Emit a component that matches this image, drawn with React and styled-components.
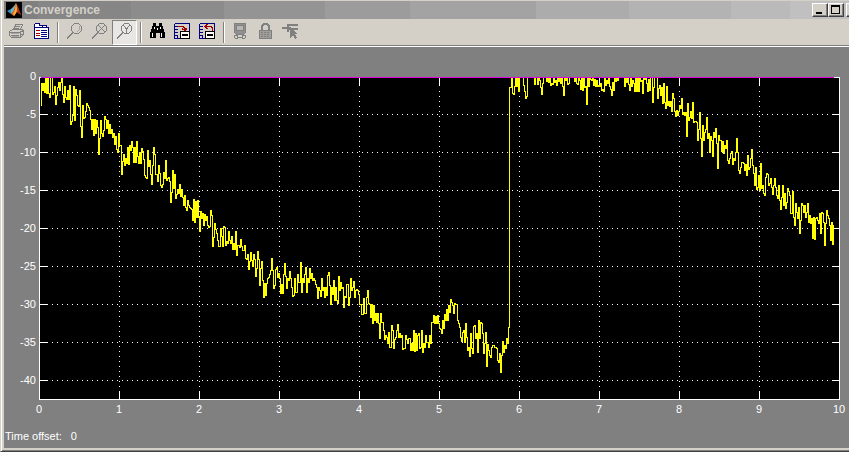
import React from 'react'
import styled, { createGlobalStyle } from 'styled-components'

const GlobalStyle = createGlobalStyle`
    body {
        margin: 0;
        background: #d4d0c8;
        font-family: "Liberation Sans", Arial, sans-serif;
    }
`
const Window = styled.div`
    min-height: 100vh;
    box-sizing: border-box;
    display: flex;
    flex-direction: column;
    padding-top: 1px;
    padding-left: 2px;
    background: #d4d0c8;
    border-left: 1px solid #d4d0c8;
    border-bottom: 1px solid #404040;
    box-shadow: inset 1px 0 0 #ffffff, inset 0 -1px 0 #808080;
    overflow: hidden;
`
const TitleBar = styled.header`
    height: 18px;
    display: flex;
    align-items: center;
    gap: 2px;
    margin-left: 1px;
    padding-left: 2px;
    background: linear-gradient(
        to right,
        #808080 4%, #868686 4% 15%, #8c8c8c 15% 26%, #949494 26% 38%,
        #9c9c9c 38% 48%, #a3a3a3 48% 63%, #acacac 63% 74%, #b3b3b3 74% 86%,
        #bababa 86% 93%, #c0c0c0 93%
    );
    overflow: hidden;
`
const Title = styled.h1`
    flex: 1;
    margin: 0;
    font-size: 12px;
    line-height: 18px;
    font-weight: bold;
    color: #d4d0c8;
`
const WindowControls = styled.div`
    display: flex;
    margin-right: -13px;
`
const ControlButton = styled.button`
    width: 16px;
    height: 14px;
    padding: 0;
    display: flex;
    background: #d4d0c8;
    border: 1px solid;
    border-color: #ffffff #404040 #404040 #ffffff;
    box-shadow: inset -1px -1px 0 #808080;
    margin-left: ${props => props.$spaced ? '2px' : '0'};
`
const Toolbar = styled.nav`
    height: 26px;
    display: flex;
    align-items: center;
    margin-left: 1px;
    border-bottom: 1px solid #808080;
`
const ToolButton = styled.button`
    width: 25px;
    height: 25px;
    padding: 0 0 2px;
    display: flex;
    align-items: center;
    justify-content: center;
    border: 1px solid;
    border-color: ${props => props.$pressed ? '#808080 #ffffff #ffffff #808080' : 'transparent'};
    background: ${props => props.$pressed ? '#e9e7e3' : 'transparent'};
`
const Separator = styled.div`
    width: 1px;
    height: 21px;
    margin: 0 4px 0 3px;
    background: #808080;
    box-shadow: 1px 0 0 #ffffff;
`
const Scope = styled.main`
    flex: 1;
    display: flex;
    flex-direction: column;
    margin-left: 1px;
    margin-bottom: 3px;
    border-top: 1px solid #ffffff;
    background: #808080;
`
const Chart = styled.svg`
    display: block;
    width: 100%;
    font-size: 11px;
    fill: #ffffff;
`
const Status = styled.footer`
    display: flex;
    gap: 9px;
    padding: 11px 1px 0;
    font-size: 11px;
    line-height: 13px;
    color: #ffffff;
`

// level below 0 dB for each column of the plot, 38 units per 5 dB
const samples = [
    28, 6, 13, 6, 15, 0, 16, 0, 16, 20,
    0, 0, 17, 15, 9, 27, 18, 10, 5, 13,
    5, 0, 17, 25, 9, 20, 22, 13, 22, 8,
    47, 44, 38, 9, 43, 12, 18, 28, 29, 13,
    49, 60, 28, 41, 40, 34, 26, 28, 30, 33,
    42, 52, 42, 58, 42, 56, 43, 50, 77, 61,
    43, 56, 59, 53, 39, 42, 51, 43, 56, 47,
    56, 52, 60, 56, 67, 59, 72, 75, 56, 68,
    68, 97, 84, 77, 88, 81, 86, 70, 87, 68,
    73, 64, 70, 85, 70, 85, 64, 79, 86, 75,
    86, 71, 74, 82, 98, 100, 101, 73, 89, 83,
    97, 107, 88, 70, 77, 97, 97, 104, 88, 96,
    108, 110, 107, 95, 101, 83, 103, 101, 100, 104,
    125, 115, 93, 111, 97, 121, 117, 112, 116, 107,
    119, 112, 120, 128, 118, 130, 133, 123, 128, 130,
    131, 132, 143, 122, 145, 124, 140, 123, 140, 154,
    134, 141, 136, 148, 137, 143, 139, 148, 150, 149,
    133, 138, 169, 160, 146, 152, 156, 163, 169, 169,
    151, 159, 169, 149, 150, 168, 164, 166, 154, 163,
    166, 159, 172, 166, 172, 154, 178, 168, 168, 170,
    162, 169, 173, 173, 168, 181, 182, 177, 192, 184,
    175, 183, 189, 177, 182, 199, 191, 174, 182, 208,
    191, 184, 203, 220, 206, 218, 206, 201, 200, 197,
    193, 181, 193, 211, 208, 192, 190, 200, 196, 201,
    216, 207, 216, 197, 186, 199, 211, 201, 203, 194,
    201, 210, 219, 218, 201, 215, 215, 197, 205, 205,
    185, 215, 201, 205, 197, 190, 215, 201, 205, 191,
    201, 196, 203, 201, 203, 207, 210, 221, 210, 213,
    219, 201, 213, 210, 220, 210, 218, 198, 195, 208,
    227, 210, 217, 203, 223, 210, 223, 226, 199, 213,
    205, 211, 210, 230, 219, 220, 207, 207, 228, 220,
    201, 213, 210, 204, 220, 213, 212, 213, 217, 227,
    227, 237, 237, 221, 236, 236, 220, 213, 226, 227,
    240, 227, 246, 228, 243, 236, 245, 236, 246, 261,
    236, 245, 245, 253, 262, 258, 260, 266, 255, 270,
    270, 248, 253, 271, 262, 260, 253, 247, 260, 256,
    260, 258, 272, 271, 271, 258, 262, 266, 261, 261,
    273, 266, 273, 253, 274, 256, 273, 258, 256, 271,
    270, 253, 275, 266, 270, 258, 265, 265, 270, 258,
    266, 245, 245, 238, 246, 239, 246, 238, 246, 251,
    252, 256, 243, 251, 237, 243, 232, 243, 228, 235,
    222, 225, 228, 236, 226, 227, 227, 243, 246, 250,
    260, 264, 255, 253, 265, 246, 260, 273, 270, 279,
    256, 271, 276, 249, 248, 261, 256, 275, 243, 261,
    245, 246, 256, 276, 266, 255, 289, 267, 273, 278,
    280, 270, 268, 268, 270, 270, 271, 283, 285, 276,
    295, 278, 264, 275, 268, 271, 261, 266, 250, 10,
    10, 0, 16, 17, 9, 0, 9, 0, 14, 0,
    0, 0, 0, 8, 14, 21, 19, 0, 0, 0,
    0, 0, 0, 0, 7, 0, 0, 7, 0, 3,
    10, 17, 6, 0, 0, 0, 4, 0, 5, 0,
    8, 6, 7, 0, 5, 3, 8, 0, 4, 0,
    6, 0, 9, 18, 0, 3, 0, 7, 6, 0,
    0, 0, 0, 0, 4, 0, 6, 7, 0, 3,
    12, 0, 13, 0, 10, 9, 27, 0, 9, 0,
    2, 3, 0, 8, 2, 9, 3, 9, 8, 9,
    6, 13, 12, 14, 0, 8, 3, 6, 0, 9,
    12, 18, 5, 13, 0, 4, 0, 3, 0, 0,
    0, 0, 0, 0, 9, 0, 5, 0, 7, 13,
    0, 9, 3, 6, 14, 0, 14, 0, 14, 0,
    4, 3, 16, 0, 2, 0, 6, 14, 2, 13,
    0, 0, 25, 10, 0, 0, 0, 21, 11, 8,
    18, 10, 26, 6, 25, 31, 9, 28, 24, 29,
    24, 34, 16, 21, 34, 39, 33, 38, 34, 28,
    31, 21, 37, 35, 38, 35, 59, 26, 43, 40,
    34, 41, 25, 45, 44, 44, 45, 63, 52, 35,
    61, 79, 48, 63, 55, 52, 40, 61, 56, 75,
    59, 63, 79, 55, 60, 51, 66, 91, 58, 63,
    63, 74, 64, 76, 68, 71, 63, 83, 86, 81,
    76, 74, 87, 81, 83, 75, 61, 75, 93, 96,
    90, 85, 85, 86, 93, 87, 98, 78, 92, 90,
    81, 72, 88, 96, 108, 90, 112, 110, 98, 113,
    86, 111, 108, 116, 118, 100, 96, 97, 108, 106,
    101, 110, 117, 108, 101, 110, 118, 121, 108, 123,
    132, 120, 108, 128, 116, 131, 125, 111, 114, 118,
    136, 136, 114, 140, 148, 126, 135, 141, 130, 156,
    143, 126, 128, 135, 128, 140, 135, 126, 145, 138,
    146, 141, 161, 140, 162, 141, 140, 143, 146, 136,
    156, 135, 136, 145, 168, 146, 133, 138, 141, 148,
    163, 145, 167, 147
]

const seconds = [0, 1, 2, 3, 4, 5, 6, 7, 8, 9, 10]
const levels = [0, -5, -10, -15, -20, -25, -30, -35, -40]

const plotX = 35
const plotY = 30
const plotWidth = 800
const plotHeight = 322

const timeX = t => plotX + t * 80
const levelY = db => plotY - 1 + Math.round(-db * 7.6)

const trace = samples
    .map((s, i) => i === 0 ? `M${plotX + 1} ${plotY + s}` : `H${plotX + i + 1}V${plotY + s}`)
    .join('')

const Plot = () => (
    <Chart viewBox='0 0 845 372' role='img' aria-label='Convergence over time'>
        <rect x={plotX} y={plotY} width={plotWidth} height={plotHeight} fill='#000000' />
        <g transform='translate(.5 .5)' fill='none' stroke='#ffffff' shapeRendering='crispEdges'>
            {levels.slice(1).map(db => (
                <g key={db}>
                    <path d={`M${plotX + 12} ${levelY(db)}H${plotX + plotWidth - 8}`} strokeDasharray='1 4' />
                    <path d={`M${plotX} ${levelY(db)}h8M${plotX + plotWidth} ${levelY(db)}h-8`} />
                </g>
            ))}
            {seconds.slice(1, -1).map(t => (
                <g key={t}>
                    <path d={`M${timeX(t)} ${plotY + 13}V${plotY + plotHeight - 8}`} strokeDasharray='1 4' />
                    <path d={`M${timeX(t)} ${plotY}v8M${timeX(t)} ${plotY + plotHeight}v-8`} />
                </g>
            ))}
            <path d={trace} stroke='#ffff00' />
            <path d={`M${plotX} ${plotY}v${plotHeight}h${plotWidth}v-${plotHeight}z`} />
            <path d={`M${plotX + 1} ${plotY}h793`} stroke='#e000e0' />
        </g>
        {levels.map(db => (
            <text key={db} x={plotX - 3} y={levelY(db) + 4} textAnchor='end'>{db}</text>
        ))}
        {seconds.map(t => (
            <text key={t} x={timeX(t)} y={plotY + plotHeight + 14} textAnchor='middle'>{t}</text>
        ))}
    </Chart>
)

const MatlabLogo = () => (
    <svg width='16' height='16' viewBox='0 0 16 16' aria-hidden='true'>
        <rect width='16' height='16' fill='#000000' />
        <path d='M1 9l4-2 2 2-2 3z' fill='#3b8fc0' />
        <path d='M5 7l3-3 2-3-1 7-3 4-1-1z' fill='#6fb4cf' />
        <path d='M10 1l2 4 3 8-4-3-3 4-3-2 3-4z' fill='#d95b1a' />
        <path d='M10 1l1 6-1 4-2 3-1-2 2-4z' fill='#f4b13d' />
        <path d='M11 4l4 9-3-2z' fill='#9c2417' />
    </svg>
)

const Icon = ({ children, color = '#808080' }) => (
    <svg width='17' height='17' viewBox='0 0 17 17' fill='none' stroke={color} shapeRendering='crispEdges' aria-hidden='true'>
        {children}
    </svg>
)

const PrintIcon = () => (
    <Icon>
        <path d='M5.5 6.5l2-5h7l-2 5M7 3.5h5M6 5.5h5' />
        <path d='M1.5 8.5l3-2h9l2 1v4l-3 3h-9l-2-2zM1.5 9.5h10l4-2M12.5 9.5v5M3 12.5h8M13 11.5h2' />
        <path d='M3 10.5h8M4 13.5h7' stroke='#a8a6a2' />
    </Icon>
)
const ParamsIcon = () => (
    <Icon color='#000080'>
        <path d='M1.5 15.5v-14l1-1h4v2h7v2h2v11z' fill='#ffffff' />
        <path d='M1 4.5h15M9.5 2v3M1 15.5h15' />
        <path d='M8 7.5h6M8 9.500h6M8 11.500h6M8 13.500h6' />
        <path d='M3 7.500h4M3 10.500h4M3 12.500h4' stroke='#a00000' />
    </Icon>
)
const ZoomIcon = ({ mark }) => (
    <Icon>
        <path d='M8.5 .5h4l3 3v4l-3 3h-4l-3-3v-4z' />
        <path d='M7 9.5L1 15.5' strokeWidth='2' />
        {mark === 'x' && <path d='M7 2l7 7M14 2L7 9' />}
        {mark === 'y' && <path d='M7 2l3.500 4L14 2M10.500 6v4' />}
        {!mark && <path d='M13 3v4l-2 2' stroke='#a8a6a2' />}
    </Icon>
)
const BinocularsIcon = () => (
    <Icon color='none'>
        <path d='M4 0h3v3h3V0h3v3h1v3h1v3h1v6h-5v-5H7v5H1V9h1V6h1V3h1z' fill='#000000' />
        <path d='M5 4h1v2H5zM11 4h1v2h-1zM3 10h1v4H3zM12 10h1v4h-1zM8 5h1v2H8z' fill='#ffffff' />
    </Icon>
)
const AxesIcon = ({ restore }) => (
    <Icon color='#000080'>
        <path d='M.5 .5v15H6M.5 .5h15V8M1 3.500h3M1 6.500h3M1 9.500h3M1 12.500h3M3.500 15v-2' />
        {restore
            ? <path d='M5 3.500h7l1 1v3M8.500 1l-3 2.500 3 2.500M7.500 2v3' stroke='#a00000' />
            : <path d='M4 3.500h5l2 2v2M8 5.500l3 2.500 2-2.500M9 6.500h4' stroke='#a00000' />}
        <path d='M6.500 8.500h9v7h-9z' fill='#ffffff' stroke='#000000' />
        <path d='M8.500 11.500h5v1h-5z' stroke='#000000' />
    </Icon>
)
const FloatIcon = () => (
    <Icon>
        <path d='M2.500 .5h11v9l-2 2h-7l-2-2z' fill='#909090' />
        <path d='M4.500 2.500h7v5h-7z' fill='#b8b6b0' />
        <path d='M3 12.500h2l1 2h4l1-2h2M3 15.500h3M10 15.500h3M2.500 12v3M13.500 12v3' />
    </Icon>
)
const LockIcon = () => (
    <Icon>
        <path d='M5 7V3l2-2h3l2 2v4' strokeWidth='2' />
        <path d='M2.500 7.500h12v8h-12z' fill='#a09e98' />
        <path d='M4 9.500h9M4 11.500h9M4 13.500h9' strokeDasharray='2 1' />
    </Icon>
)
const SignalIcon = () => (
    <Icon>
        <path d='M0 5h8M5 2h11M6 1v8M6 6h10' strokeWidth='2' />
        <path d='M8 4v11l3-3 2 4 2-1-2-4h3z' fill='#808080' stroke='none' />
    </Icon>
)

export default function App() {
    return (
        <>
            <GlobalStyle />
            <Window>
                <TitleBar>
                    <MatlabLogo />
                    <Title>Convergence</Title>
                    <WindowControls>
                        <ControlButton aria-label='Minimize'>
                            <svg width='14' height='12'><path d='M3 8h6v2H3z' /></svg>
                        </ControlButton>
                        <ControlButton aria-label='Maximize'>
                            <svg width='14' height='12'><path d='M2 1h9v9H2zM3 3v6h7V3z' fillRule='evenodd' /></svg>
                        </ControlButton>
                        <ControlButton $spaced aria-label='Close'>
                            <svg width='14' height='12'><path d='M3 2l7 7M10 2L3 9' stroke='#000000' strokeWidth='2' /></svg>
                        </ControlButton>
                    </WindowControls>
                </TitleBar>
                <Toolbar>
                    <ToolButton aria-label='Print'><PrintIcon /></ToolButton>
                    <ToolButton aria-label='Parameters'><ParamsIcon /></ToolButton>
                    <Separator />
                    <ToolButton aria-label='Zoom'><ZoomIcon /></ToolButton>
                    <ToolButton aria-label='Zoom X-axis'><ZoomIcon mark='x' /></ToolButton>
                    <ToolButton $pressed aria-pressed='true' aria-label='Zoom Y-axis'><ZoomIcon mark='y' /></ToolButton>
                    <Separator />
                    <ToolButton aria-label='Autoscale'><BinocularsIcon /></ToolButton>
                    <ToolButton aria-label='Save axes settings'><AxesIcon /></ToolButton>
                    <ToolButton aria-label='Restore axes settings'><AxesIcon restore /></ToolButton>
                    <Separator />
                    <ToolButton aria-label='Floating scope'><FloatIcon /></ToolButton>
                    <ToolButton aria-label='Lock axes'><LockIcon /></ToolButton>
                    <ToolButton aria-label='Signal selection'><SignalIcon /></ToolButton>
                </Toolbar>
                <Scope>
                    <Plot />
                    <Status><span>Time offset:</span><span>0</span></Status>
                </Scope>
            </Window>
        </>
    )
}
